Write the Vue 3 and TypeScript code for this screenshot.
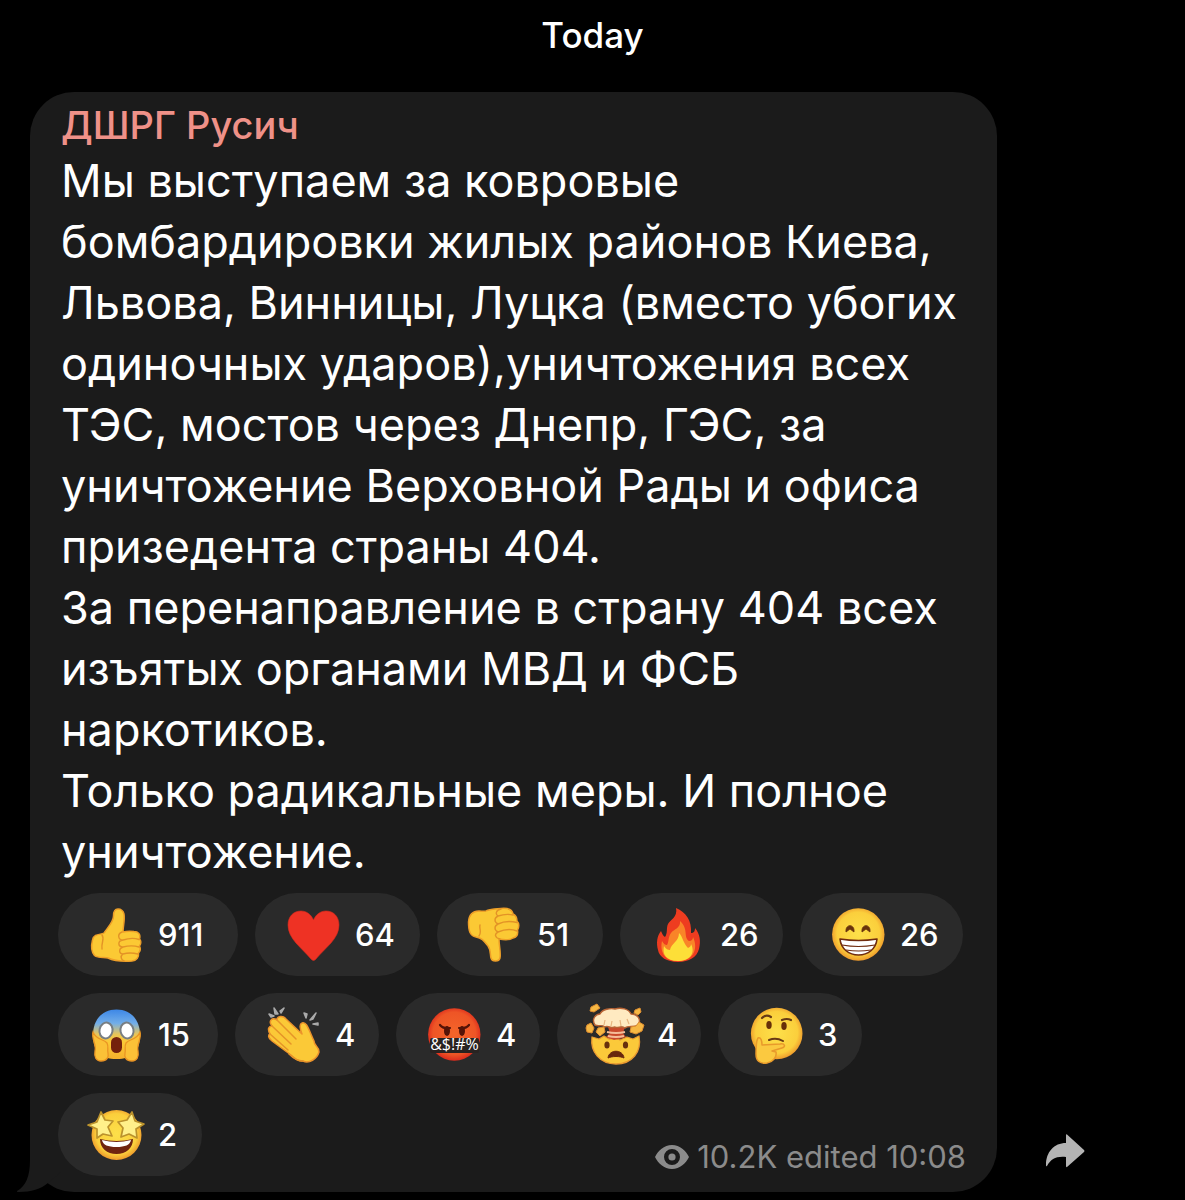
<script setup lang="ts">
interface Reaction {
  emoji: string
  label: string
  count: number
  slot: number
}

const lines: string[] = [
  'Мы выступаем за ковровые',
  'бомбардировки жилых районов Киева,',
  'Львова, Винницы, Луцка (вместо убогих',
  'одиночных ударов),уничтожения всех',
  'ТЭС, мостов через Днепр, ГЭС, за',
  'уничтожение Верховной Рады и офиса',
  'призедента страны 404.',
  'За перенаправление в страну 404 всех',
  'изъятых органами МВД и ФСБ',
  'наркотиков.',
  'Только радикальные меры. И полное',
  'уничтожение.',
]

// slot is the width reserved for the counter beside the emoji
const reactions: Reaction[] = [
  { emoji: 'up', label: 'Thumbs up', count: 911, slot: 56 },
  { emoji: 'heart', label: 'Heart', count: 64, slot: 41 },
  { emoji: 'down', label: 'Thumbs down', count: 51, slot: 42 },
  { emoji: 'fire', label: 'Fire', count: 26, slot: 39 },
  { emoji: 'grin', label: 'Grin', count: 26, slot: 39 },
  { emoji: 'scream', label: 'Scream', count: 15, slot: 36 },
  { emoji: 'clap', label: 'Clap', count: 4, slot: 20 },
  { emoji: 'rage', label: 'Swearing', count: 4, slot: 20 },
  { emoji: 'blown', label: 'Mind blown', count: 4, slot: 20 },
  { emoji: 'think', label: 'Thinking', count: 3, slot: 20 },
  { emoji: 'stars', label: 'Star-struck', count: 2, slot: 20 },
]
</script>

<template>
  <main class="chat">
    <svg class="defs" width="0" height="0" aria-hidden="true">
      <defs>
        <radialGradient id="face" cx="50%" cy="48%" r="52%">
          <stop offset="0" stop-color="#fde04a" />
          <stop offset="0.78" stop-color="#fbcf3c" />
          <stop offset="1" stop-color="#ee9a2c" />
        </radialGradient>
        <radialGradient id="redface" cx="50%" cy="48%" r="52%">
          <stop offset="0" stop-color="#f4652a" />
          <stop offset="0.78" stop-color="#ee5526" />
          <stop offset="1" stop-color="#dc2b1c" />
        </radialGradient>
        <linearGradient id="fear" x1="0" y1="0" x2="0" y2="1">
          <stop offset="0" stop-color="#3d87e6" />
          <stop offset="0.28" stop-color="#72aee9" />
          <stop offset="0.5" stop-color="#e8c559" />
          <stop offset="0.65" stop-color="#fbc936" />
          <stop offset="1" stop-color="#f5b02c" />
        </linearGradient>
      </defs>
    </svg>

    <div class="date">Today</div>

    <div class="row">
      <article class="bubble">
        <svg class="tail" viewBox="0 0 60 60" aria-hidden="true">
          <path d="M13 0V28C13 44 9 54 0 59Q-1 60 2 60C14 60 24 57 31 51L44 40V0Z" fill="#1b1b1b" />
        </svg>
        <h2 class="sender">ДШРГ Русич</h2>
        <p class="text">{{ lines.join('\n') }}</p>

        <div class="reactions">
          <button v-for="r in reactions" :key="r.emoji" type="button" class="pill" :aria-label="`${r.label} ${r.count}`">
            <svg class="emoji" viewBox="0 0 56 56" aria-hidden="true">
              <g v-if="r.emoji === 'up'" stroke-linejoin="round" stroke-linecap="round">
                <path d="M30 2C26 2 25.500 5 25.500 9C25.500 15 20 20 16 26C13 28 6 26 4.500 33C3 39 3.500 45 6.500 48.500C10 51.500 16 50 20 51C27 54.500 36 54.500 44 54C49 53.500 51 50 50.500 46C52.500 44 52.500 41 51.500 39C53.500 36.500 53 33.500 51.500 32C53 27 50 24.500 46 24.500C42 24 39 24 35 25C35 19 37 13 36 7C35 3.500 33 2 30 2Z" fill="#fbc934" stroke="#ee9f28" stroke-width="1.500" />
                <path d="M34 25C29 27 30 33 35 33C29 34 30 40 35 40C30 42 31 47 35 47C32 49 33 53 36 54M35 33C41 31 47 31 51 32.500M35 40C41 38.500 46 38.500 51 40M35 47C40 45.500 46 46 50 47M14 28C17 32 13 35 14 42" fill="none" stroke="#e39326" stroke-width="1.400" />
              </g>
              <path v-else-if="r.emoji === 'heart'" d="M28.500 13C31 7 36 4 41 4C49 4 54 10 54 18C54 32 40 41 31 52Q28.500 55 26 52C17 41 3 32 3 18C3 10 8 4 16 4C21 4 26 7 28.500 13Z" fill="#ee3224" stroke="#d92a1d" stroke-width="0.600" />
              <g v-else-if="r.emoji === 'down'" stroke-linejoin="round" stroke-linecap="round">
                <path d="M12 4C6 4 2 8 1.500 15C1.500 24 3 29 9 30C15 31 17 34 21 39C24 43 23 48 24 51C25 55 32 55 33 51C34 45 32 39 32 32C37 33 43 33 46 31C51 30 51 26 50.500 23C52.500 20 52 16 50 14C50 10 48 8 46 7C45 2 39 1 34 1.500C28 2 24 2 20 3.500C18 5 15 4 12 4Z" fill="#fbc934" stroke="#ee9f28" stroke-width="1.500" />
                <path d="M34 2C29 3 28 7 31 9C27 11 27 15 31 17C27 19 27 23 31 25C27 27 28 31 33 32M31 9C37 7 42 7 46 8M31 17C37 14 44 14 50 15.500M31 25C38 22 45 22 50 24M12 29C15 25 12 22 13 18" fill="none" stroke="#e39326" stroke-width="1.400" />
              </g>
              <g v-else-if="r.emoji === 'fire'">
                <path d="M26 1C36 5 42 14 41 26C44 26 45 24 45 21C50 27 51 34 49 42C47 50 39 55 28 55C17 55 9 50 8 43C6 36 7 29 11 24C12 26 13 29 15 30C18 26 16 21 18 17C20 13 28 10 26 1Z" fill="#ee3c20" />
                <path d="M30 14C39 22 33 30 39 34C42 34 43 32 43 30C48 40 45 54 28 54C13 54 10 43 12 34C14 37 15 38 17 38C19 35 18 30 21 26C24 22 31 21 30 14Z" fill="#f98428" />
                <path d="M29 26C33 30 33 36 38 41C40 40 41 39 41 37C46 47 39 54 28 54C16 54 12 47 14 39C16 42 18 43 20 43C21 36 29 35 29 26Z" fill="#fddf38" />
              </g>
              <g v-else-if="r.emoji === 'grin'">
                <circle cx="28.300" cy="27.500" r="26.200" fill="url(#face)" />
                <path d="M16 25C15 16.500 25 16.500 24 25L20 22ZM32 25C31 16.500 41 16.500 40 25L36 22Z" fill="#68320c" stroke="#68320c" stroke-width="0.800" stroke-linejoin="round" />
                <path d="M10 32Q28.500 35 47 32C46 42 38 48 28.500 48C19 48 11 42 10 32Z" fill="#fff" stroke="#702c10" stroke-width="1.600" stroke-linejoin="round" />
                <path d="M12 38Q28.500 41 45 38M16 43Q28.500 45 41 43" fill="none" stroke="#702c10" stroke-width="1.200" />
              </g>
              <g v-else-if="r.emoji === 'scream'">
                <path d="M28.500 2.500C43 2.500 52 13 52 28C52 45 44 52 28.500 52C13 52 5 45 5 28C5 13 14 2.500 28.500 2.500Z" fill="url(#fear)" />
                <ellipse cx="18" cy="23.500" rx="6.500" ry="8" fill="#fff" stroke="#777e83" stroke-width="2" transform="rotate(12 18 23.500)" />
                <ellipse cx="39" cy="23.500" rx="6.500" ry="8" fill="#fff" stroke="#777e83" stroke-width="2" transform="rotate(-12 39 23.500)" />
                <rect x="23" y="30" width="11" height="16" rx="5.500" fill="#74210c" />
                <path d="M5 25C3 31 9 38 7 44C6 50 8 54 13 54C19 54 21 50 20 46C19 42 21 40 19 36C16 32 8 33 5 25ZM52 25C54 31 48 38 50 44C51 50 49 54 44 54C38 54 36 50 37 46C38 42 36 40 38 36C41 32 49 33 52 25Z" fill="#fbc137" stroke="#e99424" stroke-width="1.300" />
              </g>
              <g v-else-if="r.emoji === 'clap'" stroke-linejoin="round" stroke-linecap="round">
                <path d="M5 27C2 22 4 19 7 19C3 14 7 10 12 13C12 9 18 8 21 12L37 27C35 22 34 17 37 16C42 14 44 24 49 34C49 39 54 39 54 45C52 52 44 57 38 54C33 55 29 51 26 48L7 34C3 31 3 28 5 27Z" fill="#fbc937" stroke="#ec932b" stroke-width="1.500" />
                <path d="M5 27L23 43M7 19L26 37M12 13L31 32M24 47C29 52 34 54 38 54" fill="none" stroke="#e69428" stroke-width="1.500" />
                <path d="M4 7L9 9L6 10ZM9 1L13 7L10 7ZM19 1L16 6L15 4ZM39 6L41 11L42 7ZM51 6L45 13L48 12ZM53 16L48 17L53 18Z" fill="#aaa" stroke="#aaa" stroke-width="1.500" />
              </g>
              <g v-else-if="r.emoji === 'rage'">
                <circle cx="28.300" cy="27.500" r="26.200" fill="url(#redface)" />
                <ellipse cx="21" cy="24" rx="3" ry="5" fill="#551307" />
                <ellipse cx="36" cy="24" rx="3" ry="5" fill="#551307" />
                <path d="M14 18Q17 22 24 21M43 18Q40 22 33 21" fill="none" stroke="#551307" stroke-width="2.200" stroke-linecap="round" />
                <rect x="4" y="31" width="49" height="15" rx="2" fill="#292321" />
                <text x="28.500" y="43" text-anchor="middle" class="curse">&amp;$!#%</text>
              </g>
              <g v-else-if="r.emoji === 'blown'" stroke-linejoin="round">
                <path d="M5 30L12 32L17 29L22 32L28 31L33 33L40 30L46 32L52 29C55 45 45 57 29 57C13 57 3 45 5 30Z" fill="#fbc93a" stroke="#e99931" stroke-width="1.300" />
                <path d="M21 20H38L36 26L39 30L32 32L27 33L19 30L23 26Z" fill="#c94a2b" />
                <path d="M20 25Q29 27 38 25M21 29Q29 31 37 29" fill="none" stroke="#f5bd98" stroke-width="2" />
                <path d="M8 18C4 12 9 7 13 7C15 2 24 1 28 2C34 0 42 2 44 7C50 7 55 12 51 18C47 21 41 18 38 21C34 18 31 22 28 20C24 22 21 18 18 20C15 17 12 20 8 18Z" fill="#ffeac1" stroke="#b96435" stroke-width="1.400" />
                <path d="M18 13L17 18M25 14L24 19M33 13L34 19M40 12L42 17" stroke="#e8b681" stroke-width="1.200" />
                <path d="M4 0L10-3L13 1L7 5L3 4ZM48 3L53 1L54 5L51 8L47 6ZM0 18L4 16L7 21L5 26L0 25L-1 21ZM11 21L17 20L18 25L13 29L9 25ZM44 20L49 19L52 15L57 18L55 24L49 27L43 25Z" fill="#f7b843" stroke="#dc8d30" stroke-width="1" />
                <ellipse cx="20" cy="38" rx="2.600" ry="3.600" fill="#68300d" />
                <ellipse cx="38.500" cy="38" rx="2.600" ry="3.600" fill="#68300d" />
                <path d="M21 51C22 42 36 42 37 51C33 49 25 49 21 51Z" fill="#68260d" stroke="#68260d" />
              </g>
              <g v-else-if="r.emoji === 'think'" stroke-linecap="round" stroke-linejoin="round">
                <circle cx="28.700" cy="26.500" r="25.800" fill="url(#face)" />
                <path d="M14 11Q18 7 23 10M34 13Q39 11 43 13" fill="none" stroke="#673a15" stroke-width="2.200" />
                <ellipse cx="21" cy="18" rx="2.700" ry="3.900" fill="#673009" />
                <ellipse cx="36" cy="19" rx="2.700" ry="3.900" fill="#673009" />
                <path d="M21 33Q28 30 35 34" fill="none" stroke="#673a15" stroke-width="2" />
                <path d="M10 31C13 30 14 34 14 38L32 37C37 36 38 40 34 41L24 44L28 45C29 50 25 55 19 56C12 57 8 54 8 47C8 41 8 34 10 31Z" fill="#fbc940" stroke="#e89a2b" stroke-width="1.500" />
              </g>
              <g v-else stroke-linejoin="round">
                <circle cx="28.500" cy="28" r="25" fill="url(#face)" />
                <path d="M12 32Q28.500 36 45 32C45 41 38 47 28.500 47C19 47 12 41 12 32Z" fill="#6f2410" />
                <path d="M14 33Q28.500 37 43 33C42 38 37 40 28.500 40C20 40 15 38 14 33Z" fill="#fff" />
                <path d="M13 5L17 13L25 14L20 20L24 29L15 27L9 31L9 22L0 18L9 15ZM44 5L47 14L56 17L48 22L49 31L41 27L33 30L35 21L30 15L39 13Z" fill="#fff08a" stroke="#bb922c" stroke-width="1.700" />
              </g>
            </svg>
            <span class="count" :style="{ width: `${r.slot}px` }">{{ r.count }}</span>
          </button>

          <div class="meta">
            <svg class="eye" viewBox="0 0 34 24" aria-hidden="true">
              <path d="M17 0C25 0 31 6 34 12C31 18 25 24 17 24C9 24 3 18 0 12C3 6 9 0 17 0ZM17 4A8 8 0 1 0 17 20A8 8 0 1 0 17 4Z" fill="#8b8b8b" fill-rule="evenodd" />
              <circle cx="17" cy="12" r="3.600" fill="#8b8b8b" />
            </svg>
            <span>10.2K edited 10:08</span>
          </div>
        </div>
      </article>

      <aside class="side">
        <button type="button" class="share" aria-label="Share">
          <svg viewBox="0 0 39 34" aria-hidden="true">
            <path d="M20 1Q20 0 21 0.500L38 16Q39 17 38 18L21 33Q20 33.500 20 32V23C10 22 5 25 1 32Q0 33 0 31C0 18 8 9 20 9Z" fill="#b4b4b4" />
          </svg>
        </button>
      </aside>
    </div>
  </main>
</template>

<style>
body {
  margin: 0;
  background: #000;
}
</style>

<style scoped>
.chat {
  box-sizing: border-box;
  min-height: 100vh;
  background: #000;
  color: #fff;
  font-family: Inter, "Liberation Sans", sans-serif;
}

.defs {
  position: absolute;
}

.date {
  padding: 13px 0 35px;
  font-size: 35px;
  font-weight: 500;
  line-height: 44px;
  text-align: center;
}

.row {
  display: flex;
  padding: 0 0 8px 30px;
}

.bubble {
  position: relative;
  box-sizing: border-box;
  flex: 1;
  min-width: 0;
  padding: 11px 28px 16px;
  border-radius: 44px;
  background: #1b1b1b;
}

.tail {
  position: absolute;
  bottom: 0;
  left: -13px;
  width: 60px;
  height: 60px;
}

.sender {
  margin: 0 3px;
  color: #ef9188;
  font-size: 38px;
  font-weight: 500;
  line-height: 44px;
}

.text {
  margin: 3px 3px 11px;
  font-size: 45px;
  line-height: 61px;
  white-space: pre;
}

.reactions {
  position: relative;
  display: flex;
  flex-wrap: wrap;
  gap: 17px;
}

.pill {
  display: flex;
  align-items: center;
  gap: 14px;
  height: 83px;
  padding: 0 24px 0 30px;
  border: 0;
  border-radius: 42px;
  background: #2a2a2a;
  color: #fff;
  font: inherit;
  font-size: 31px;
  font-weight: 500;
}

.count {
  text-align: left;
  white-space: nowrap;
}

.emoji {
  width: 56px;
  height: 56px;
  overflow: visible;
}

.curse {
  fill: #fff;
  font-family: "Open Sans", sans-serif;
  font-size: 16px;
  font-weight: 400;
}

.meta {
  display: flex;
  align-items: center;
  align-self: flex-end;
  gap: 8px;
  margin: 0 3px 1px auto;
  color: #8b8b8b;
  font-size: 31px;
  line-height: 36px;
}

.eye {
  width: 34px;
  height: 24px;
}

.side {
  display: flex;
  align-items: flex-end;
  width: 188px;
}

.share {
  margin: 0 0 24px 49px;
  padding: 0;
  border: 0;
  background: none;
}

.share svg {
  display: block;
  width: 39px;
  height: 34px;
}
</style>
